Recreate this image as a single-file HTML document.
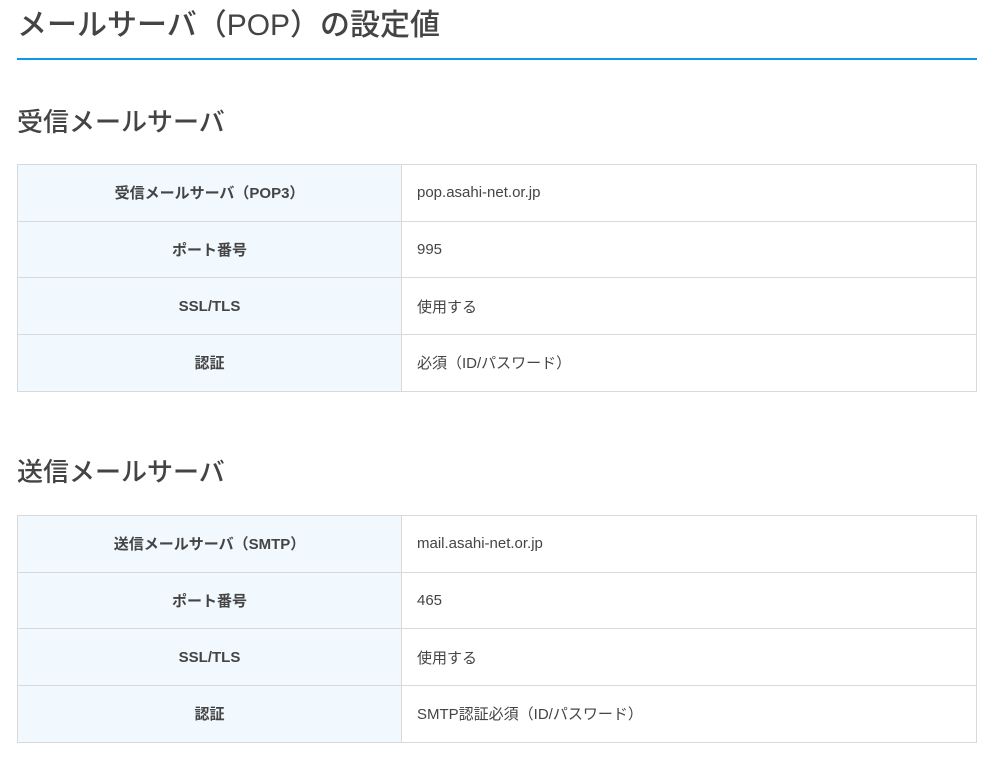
<!DOCTYPE html>
<html><head><meta charset="utf-8"><style>
*{margin:0;padding:0;box-sizing:border-box}
body{width:1002px;height:758px;background:#fff;font-family:"Liberation Sans","Noto Sans CJK JP",sans-serif;color:#444;overflow:hidden}
h1{position:absolute;left:17px;top:4px;width:960px;height:56px;font-size:30px;font-weight:500;line-height:44px;border-bottom:2px solid #0a9aea}
h2{position:absolute;left:17px;font-size:26px;font-weight:500;line-height:36px}
table{position:absolute;left:17px;width:960px;border-collapse:collapse;font-size:15px}
td{border:1px solid #d9d9d9;height:56.7px;padding:0 15px}
td.h{width:384px;background:#f1f8fe;text-align:center;font-weight:bold;color:#444}
</style></head><body>
<h1>メールサーバ（POP）の設定値</h1>
<h2 style="top:104px">受信メールサーバ</h2>
<table style="top:164px">
<tr><td class="h">受信メールサーバ（POP3）</td><td>pop.asahi-net.or.jp</td></tr>
<tr><td class="h">ポート番号</td><td>995</td></tr>
<tr><td class="h">SSL/TLS</td><td>使用する</td></tr>
<tr><td class="h">認証</td><td>必須（ID/パスワード）</td></tr>
</table>
<h2 style="top:454px">送信メールサーバ</h2>
<table style="top:515px">
<tr><td class="h">送信メールサーバ（SMTP）</td><td>mail.asahi-net.or.jp</td></tr>
<tr><td class="h">ポート番号</td><td>465</td></tr>
<tr><td class="h">SSL/TLS</td><td>使用する</td></tr>
<tr><td class="h">認証</td><td>SMTP認証必須（ID/パスワード）</td></tr>
</table>
</body></html>
